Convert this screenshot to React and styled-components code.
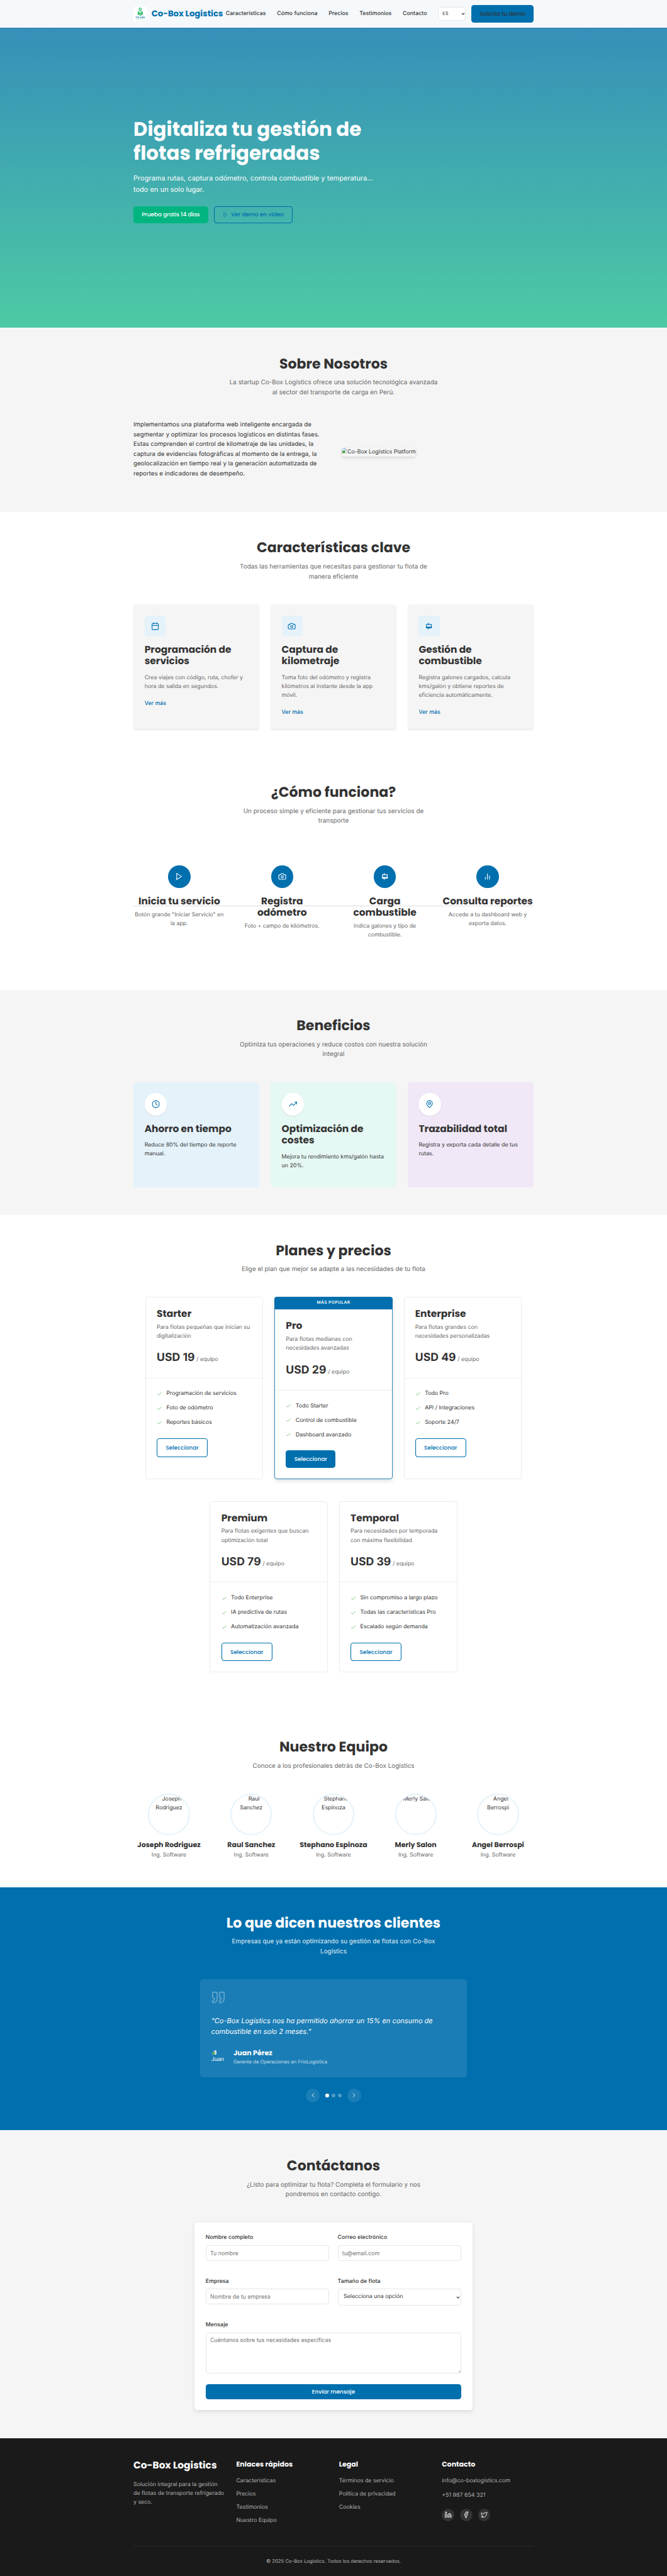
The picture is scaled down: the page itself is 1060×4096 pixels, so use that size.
import React from 'react';
import styled, { createGlobalStyle, css } from 'styled-components';

/* Sizes are written on a 16-unit base and emitted as rem. */
const r = (n) => `${n / 16}rem`;

const c = {
  primary: '#006fae',
  accent: '#00b580',
  text: '#333333',
  muted: '#666666',
  light: '#f5f5f5',
  tint: '#e5f2fa',
  line: '#ebebeb',
  dark: '#1a1a1a',
};

const bodyFont = `Inter, 'Open Sans', sans-serif`;
const headFont = `Poppins, Inter, 'Open Sans', sans-serif`;

const Global = createGlobalStyle`
  *, *::before, *::after { box-sizing: border-box; margin: 0; padding: 0; }
  html { font-size: 55.2083%; }
  body {
    font-family: ${bodyFont};
    font-size: 1rem;
    line-height: 1.6;
    color: ${c.text};
    background: #fff;
    text-rendering: geometricPrecision;
  }
  a { color: inherit; text-decoration: none; }
  ul { list-style: none; }
  button, input, textarea { font: inherit; color: inherit; }
`;

const heading = css`
  font-family: ${headFont};
  font-weight: 700;
  line-height: 1.2;
  white-space: pre;
`;

/* ---------- shared ---------- */
const Container = styled.div`
  width: ${r(1152)};
  margin: 0 auto;
`;

const Section = styled.section`
  padding: ${r(80)} 0;
  background: ${(p) => p.$bg || '#fff'};
  color: ${(p) => p.$color || c.text};
`;

const SectionHead = styled.header`
  text-align: center;
  margin-bottom: ${r(64)};
`;

const H2 = styled.h2`
  ${heading}
  font-size: ${r(40)};
  margin-bottom: ${r(16)};
`;

const Lead = styled.p`
  font-size: ${r(18)};
  line-height: ${r(28.8)};
  white-space: pre;
  color: ${(p) => p.$color || c.muted};
`;

const H3 = styled.h3`
  ${heading}
  font-size: ${r(28)};
`;

const Copy = styled.p`
  white-space: pre;
  color: ${(p) => p.$color || c.muted};
`;

const Svg = styled.svg`
  display: block;
  flex: none;
  width: ${(p) => r(p.$size)};
  height: ${(p) => r(p.$size)};
  fill: none;
  stroke: currentColor;
  stroke-width: 2;
  stroke-linecap: round;
  stroke-linejoin: round;
`;

const glyphs = {
  play: <polygon points="5 3 19 12 5 21 5 3" />,
  calendar: (
    <>
      <rect x="3" y="4" width="18" height="18" rx="2" />
      <path d="M16 2v4M8 2v4M3 10h18" />
    </>
  ),
  camera: (
    <>
      <path d="M14.5 4h-5L7 7H4a2 2 0 0 0-2 2v9a2 2 0 0 0 2 2h16a2 2 0 0 0 2-2V9a2 2 0 0 0-2-2h-3l-2.5-3z" />
      <circle cx="12" cy="13" r="3" />
    </>
  ),
  fuel: (
    <>
      <path d="M10 3v4M10 17v4M4 15h16" />
      <rect x="5" y="7" width="14" height="10" />
      <rect x="5" y="15" width="14" height="2" fill="currentColor" />
    </>
  ),
  bars: <path d="M18 20V10M12 20V4M6 20v-6" />,
  clock: (
    <>
      <circle cx="12" cy="12" r="10" />
      <path d="M12 6v6l4 2" />
    </>
  ),
  trend: (
    <>
      <polyline points="23 6 13.5 15.5 8.5 10.5 1 18" />
      <polyline points="17 6 23 6 23 12" />
    </>
  ),
  pin: (
    <>
      <path d="M20 10c0 6-8 12-8 12s-8-6-8-12a8 8 0 0 1 16 0Z" />
      <circle cx="12" cy="10" r="3" />
    </>
  ),
  check: <polyline points="20 6 9 17 4 12" />,
  left: <polyline points="15 18 9 12 15 6" />,
  right: <polyline points="9 18 15 12 9 6" />,
  quote: (
    <>
      <path d="M3 21c3 0 7-1 7-8V5c0-1.25-.756-2.017-2-2H4c-1.25 0-2 .75-2 1.972V11c0 1.25.75 2 2 2 1 0 1 0 1 1v1c0 1-1 2-2 2s-1 .008-1 1.031V20c0 1 0 1 1 1z" />
      <path d="M15 21c3 0 7-1 7-8V5c0-1.25-.757-2.017-2-2h-4c-1.25 0-2 .75-2 1.972V11c0 1.25.75 2 2 2h.75c0 2.25.25 4-2.75 4v3c0 1 0 1 1 1z" />
    </>
  ),
  linkedin: (
    <>
      <path d="M16 8a6 6 0 0 1 6 6v7h-4v-7a2 2 0 0 0-2-2 2 2 0 0 0-2 2v7h-4v-7a6 6 0 0 1 6-6z" />
      <rect x="2" y="9" width="4" height="12" />
      <circle cx="4" cy="4" r="2" />
    </>
  ),
  facebook: <path d="M18 2h-3a5 5 0 0 0-5 5v3H7v4h3v8h4v-8h3l1-4h-4V7a1 1 0 0 1 1-1h3z" />,
  twitter: (
    <path d="M22 4s-.7 2.1-2 3.4c1.6 10-9.4 17.3-18 11.6 2.2.1 4.4-.6 6-2C3 15.5.5 9.6 3 5c2.2 2.6 5.6 4.1 9 4-.9-4.2 4-6.6 7-3.8 1.1 0 3-1.2 3-1.2z" />
  ),
  caret: <polyline points="4 8 12 16 20 8" strokeWidth="4.5" strokeLinecap="butt" strokeLinejoin="miter" />,
};

const Icon = ({ name, size = 24 }) => (
  <Svg $size={size} viewBox="0 0 24 24" aria-hidden="true">
    {glyphs[name]}
  </Svg>
);

const BrokenSvg = styled.svg`
  display: inline-block;
  flex: none;
  width: ${r(16)};
  height: ${r(16)};
  vertical-align: baseline;
`;

const BrokenImage = () => (
  <BrokenSvg viewBox="0 0 16 16" aria-hidden="true">
    <path d="M1.5 .5h8.5l4.5 4.5v10.5h-13z" fill="#c6dbf7" stroke="#9a9a9a" />
    <path d="M10 .5v4.5h4.5" fill="#fff" stroke="#9a9a9a" />
    <ellipse cx="5.5" cy="5" rx="2.2" ry="1.3" fill="#fff" />
    <path d="M2 15v-3.5c3-4.5 6-4 8.5-.5L14 15z" fill="#4ea83c" />
    <path d="M8 16 16 7v4l-4.5 5z" fill="#fff" />
  </BrokenSvg>
);

const Button = styled.button`
  display: inline-flex;
  align-items: center;
  justify-content: center;
  gap: ${r(8)};
  height: ${(p) => r(p.$h || 49.6)};
  width: ${(p) => (p.$w ? r(p.$w) : 'auto')};
  border: 0;
  border-radius: ${r(8)};
  font-family: ${headFont};
  font-weight: 500;
  white-space: nowrap;
  background: ${(p) => p.$bg || c.primary};
  color: ${(p) => p.$color || '#fff'};
`;

const OutlineButton = styled(Button)`
  background: transparent;
  color: ${c.primary};
  box-shadow: inset 0 0 0 ${r(2)} ${c.primary};
`;

/* ---------- header ---------- */
const HeaderBar = styled.header`
  height: ${r(80)};
  background: #f5f9fc;
  box-shadow: 0 ${r(2)} ${r(4)} rgba(0, 0, 0, 0.1);
  position: relative;
  z-index: 2;
`;

const HeaderRow = styled(Container)`
  height: 100%;
  display: flex;
  align-items: center;
  justify-content: space-between;
`;

const Brand = styled.a`
  display: flex;
  align-items: center;
  gap: ${r(12)};
  font-size: ${r(24)};
  color: ${c.primary};
`;

const BrandName = styled.span`
  ${heading}
`;

const LogoSvg = styled.svg`
  width: ${r(40)};
  height: ${r(40)};
  background: #fff;
`;

const HeaderRight = styled.div`
  display: flex;
  align-items: center;
`;

const Nav = styled.nav`
  display: flex;
  gap: ${r(32)};
  margin-right: ${r(32)};
  font-weight: 500;
  white-space: nowrap;
`;

const LangSelect = styled.div`
  display: flex;
  align-items: center;
  justify-content: space-between;
  width: ${r(80)};
  height: ${r(40)};
  margin-right: ${r(16)};
  padding: 0 ${r(3)} 0 ${r(13)};
  font-size: ${r(13.3)};
  background: #fff;
  border-radius: ${r(8)};
  box-shadow: inset 0 0 0 1px #e6e6e6;
`;

const Logo = () => (
  <LogoSvg viewBox="0 0 40 40" aria-hidden="true">
    <path
      fillRule="evenodd"
      fill="#43c478"
      d="M19.8 2a4.6 4.6 0 0 1 4.6 4.6c0 2.6-2.6 5-4.6 7.4-2-2.4-4.6-4.8-4.6-7.4A4.6 4.6 0 0 1 19.8 2zm0 2.6a2 2 0 1 0 0 4 2 2 0 0 0 0-4z"
    />
    <path fill="#43c478" d="M12.2 13.5l2.6-1.2 5 4.7 5-4.7 2.6 1.2v8.3L19.8 25.5l-7.6-3.7z" />
    <path stroke="#fff" strokeWidth=".6" d="M19.8 17v8" />
    <text x="20" y="32" textAnchor="middle" textLength="27" fontFamily={bodyFont} fontSize="6.5" fontWeight="700" fill="#006fae">
      CO-BOX
    </text>
    <text x="20" y="37" textAnchor="middle" textLength="24" fontFamily={bodyFont} fontSize="3.4" fontWeight="600" fill="#43c478">
      LOGISTICS
    </text>
  </LogoSvg>
);

const Header = () => (
  <HeaderBar>
    <HeaderRow>
      <Brand>
        <Logo />
        <BrandName>Co-Box Logistics</BrandName>
      </Brand>
      <HeaderRight>
        <Nav>
          {['Características', 'Cómo funciona', 'Precios', 'Testimonios', 'Contacto'].map((t) => (
            <a key={t}>{t}</a>
          ))}
        </Nav>
        <LangSelect>
          ES
          <Icon name="caret" size={11} />
        </LangSelect>
        <Button $w={179} $color={c.text}>
          Solicita tu demo
        </Button>
      </HeaderRight>
    </HeaderRow>
  </HeaderBar>
);

/* ---------- hero ---------- */
const HeroArea = styled.section`
  height: ${r(944.5)};
  margin-top: ${r(-80)};
  padding-top: ${r(339.5)};
  background: linear-gradient(180deg, #348abb 0%, #4dcaa4 100%);
  color: #fff;
`;

const H1 = styled.h1`
  ${heading}
  font-size: ${r(56)};
  margin-bottom: ${r(24)};
`;

const HeroText = styled.p`
  font-size: ${r(20)};
  line-height: ${r(32)};
  white-space: pre;
  margin-bottom: ${r(32)};
`;

const ButtonRow = styled.div`
  display: flex;
  gap: ${r(16)};
`;

const Hero = () => (
  <HeroArea>
    <Container>
      <H1>{'Digitaliza tu gestión de\nflotas refrigeradas'}</H1>
      <HeroText>{'Programa rutas, captura odómetro, controla combustible y temperatura...\ntodo en un solo lugar.'}</HeroText>
      <ButtonRow>
        <Button $bg={c.accent} $w={215}>
          Prueba gratis 14 días
        </Button>
        <OutlineButton $w={228}>
          <Icon name="play" size={16} />
          Ver demo en vídeo
        </OutlineButton>
      </ButtonRow>
    </Container>
  </HeroArea>
);

/* ---------- about ---------- */
const AboutGrid = styled.div`
  display: grid;
  grid-template-columns: 1fr 1fr;
  gap: ${r(48)};
  align-items: center;
`;

const AboutText = styled.p`
  font-size: ${r(17.6)};
  line-height: ${r(28.16)};
  white-space: pre;
  margin-bottom: ${r(16)};
`;

const MissingPicture = styled.div`
  display: flex;
  justify-self: start;
  height: ${r(26)};
  white-space: nowrap;
  line-height: ${r(26)};
  border-radius: ${r(8)};
  overflow: hidden;
  box-shadow: 0 ${r(4)} ${r(8)} rgba(0, 0, 0, 0.12);
`;

const About = () => (
  <Section $bg={c.light}>
    <Container>
      <SectionHead>
        <H2>Sobre Nosotros</H2>
        <Lead>{'La startup Co-Box Logistics ofrece una solución tecnológica avanzada\nal sector del transporte de carga en Perú.'}</Lead>
      </SectionHead>
      <AboutGrid>
        <AboutText>
          {
            'Implementamos una plataforma web inteligente encargada de\nsegmentar y optimizar los procesos logísticos en distintas fases.\nEstas comprenden el control de kilometraje de las unidades, la\ncaptura de evidencias fotográficas al momento de la entrega, la\ngeolocalización en tiempo real y la generación automatizada de\nreportes e indicadores de desempeño.'
          }
        </AboutText>
        <MissingPicture>
          <BrokenImage />
          Co-Box Logistics Platform
        </MissingPicture>
      </AboutGrid>
    </Container>
  </Section>
);

/* ---------- features ---------- */
const ThreeColumns = styled.div`
  display: grid;
  grid-template-columns: repeat(3, 1fr);
  gap: ${r(32)};
`;

const FeatureCard = styled.article`
  height: ${r(358.7)};
  padding: ${r(32)};
  background: ${c.light};
  border-radius: ${r(8)};
  box-shadow: 0 ${r(2)} ${r(4)} rgba(0, 0, 0, 0.09);
`;

const FeatureIcon = styled.div`
  display: grid;
  place-items: center;
  width: ${r(60)};
  height: ${r(60)};
  margin-bottom: ${r(24)};
  border-radius: ${r(8)};
  background: ${c.tint};
  color: ${c.primary};
`;

const FeatureTitle = styled(H3)`
  margin-bottom: ${r(16)};
`;

const MoreLink = styled.a`
  display: block;
  margin-top: ${r(24)};
  font-weight: 500;
  color: ${c.primary};
`;

const features = [
  ['calendar', 'Programación de\nservicios', 'Crea viajes con código, ruta, chofer y\nhora de salida en segundos.'],
  ['camera', 'Captura de\nkilometraje', 'Toma foto del odómetro y registra\nkilómetros al instante desde la app\nmóvil.'],
  ['fuel', 'Gestión de\ncombustible', 'Registra galones cargados, calcula\nkms/galón y obtiene reportes de\neficiencia automáticamente.'],
];

const Features = () => (
  <Section>
    <Container>
      <SectionHead>
        <H2>Características clave</H2>
        <Lead>{'Todas las herramientas que necesitas para gestionar tu flota de\nmanera eficiente'}</Lead>
      </SectionHead>
      <ThreeColumns>
        {features.map(([icon, title, text]) => (
          <FeatureCard key={icon}>
            <FeatureIcon>
              <Icon name={icon} />
            </FeatureIcon>
            <FeatureTitle>{title}</FeatureTitle>
            <Copy>{text}</Copy>
            <MoreLink>Ver más</MoreLink>
          </FeatureCard>
        ))}
      </ThreeColumns>
    </Container>
  </Section>
);

/* ---------- how it works ---------- */
const Steps = styled.div`
  position: relative;
  display: grid;
  grid-template-columns: repeat(4, ${r(264)});
  gap: ${r(32)};
  height: ${r(326.4)};
  padding-top: ${r(48)};

  &::before {
    content: '';
    position: absolute;
    left: 0;
    right: 0;
    top: 50%;
    height: ${r(2)};
    background: #dddddd;
  }
`;

const Step = styled.div`
  position: relative;
  display: flex;
  flex-direction: column;
  align-items: center;
  text-align: center;
`;

const StepIcon = styled.div`
  display: grid;
  place-items: center;
  width: ${r(64)};
  height: ${r(64)};
  margin-bottom: ${r(24)};
  border-radius: 50%;
  background: ${c.primary};
  color: #fff;
`;

const StepTitle = styled(H3)`
  margin-bottom: ${r(8)};
`;

const steps = [
  ['play', 'Inicia tu servicio', 'Botón grande "Iniciar Servicio" en\nla app.'],
  ['camera', 'Registra\nodómetro', 'Foto + campo de kilómetros.'],
  ['fuel', 'Carga\ncombustible', 'Indica galones y tipo de\ncombustible.'],
  ['bars', 'Consulta reportes', 'Accede a tu dashboard web y\nexporta datos.'],
];

const HowItWorks = () => (
  <Section>
    <Container>
      <SectionHead>
        <H2>¿Cómo funciona?</H2>
        <Lead>{'Un proceso simple y eficiente para gestionar tus servicios de\ntransporte'}</Lead>
      </SectionHead>
      <Steps>
        {steps.map(([icon, title, text]) => (
          <Step key={icon}>
            <StepIcon>
              <Icon name={icon} />
            </StepIcon>
            <StepTitle>{title}</StepTitle>
            <Copy>{text}</Copy>
          </Step>
        ))}
      </Steps>
    </Container>
  </Section>
);

/* ---------- benefits ---------- */
const BenefitCard = styled.article`
  height: ${r(302.4)};
  padding: ${r(32)};
  border-radius: ${r(8)};
  background: ${(p) => p.$bg};
`;

const BenefitIcon = styled.div`
  display: grid;
  place-items: center;
  width: ${r(64)};
  height: ${r(64)};
  margin-bottom: ${r(24)};
  border-radius: 50%;
  background: #fff;
  color: ${c.primary};
  box-shadow: 0 ${r(2)} ${r(4)} rgba(0, 0, 0, 0.08);
`;

const benefits = [
  ['clock', c.tint, 'Ahorro en tiempo', 'Reduce 80% del tiempo de reporte\nmanual.'],
  ['trend', '#e5f8f3', 'Optimización de\ncostes', 'Mejora tu rendimiento kms/galón hasta\nun 20%.'],
  ['pin', '#f0e8f6', 'Trazabilidad total', 'Registra y exporta cada detalle de tus\nrutas.'],
];

const Benefits = () => (
  <Section $bg={c.light}>
    <Container>
      <SectionHead>
        <H2>Beneficios</H2>
        <Lead>{'Optimiza tus operaciones y reduce costos con nuestra solución\nintegral'}</Lead>
      </SectionHead>
      <ThreeColumns>
        {benefits.map(([icon, bg, title, text]) => (
          <BenefitCard key={icon} $bg={bg}>
            <BenefitIcon>
              <Icon name={icon} />
            </BenefitIcon>
            <FeatureTitle>{title}</FeatureTitle>
            <Copy $color={c.text}>{text}</Copy>
          </BenefitCard>
        ))}
      </ThreeColumns>
    </Container>
  </Section>
);

/* ---------- pricing ---------- */
const PlanRow = styled.div`
  display: flex;
  justify-content: center;
  gap: ${r(32)};
  margin-bottom: ${(p) => r(p.$mb)};
`;

const PlanCard = styled.article`
  width: ${r(340)};
  height: ${(p) => r(p.$h)};
  padding-top: ${r(1)};
  border-radius: ${r(8)};
  overflow: hidden;
  background: #fff;
  box-shadow: inset 0 0 0 1px ${(p) => (p.$popular ? '#2b87bc' : c.line)}
    ${(p) => (p.$popular ? `, 0 ${r(4)} ${r(12)} rgba(0, 0, 0, 0.12)` : '')};
`;

const Badge = styled.div`
  height: ${r(35.2)};
  margin-top: ${r(-1)};
  margin-bottom: ${r(1)};
  line-height: ${r(36)};
  text-align: center;
  font-size: ${r(12)};
  font-weight: 600;
  letter-spacing: ${r(0.8)};
  background: ${c.primary};
  color: #fff;
`;

const PlanHead = styled.div`
  height: ${r(233)};
  margin: 0 1px;
  padding: ${r(32)} ${r(31.2)};
  border-bottom: 1px solid #eeeeee;
`;

const PlanName = styled(H3)`
  margin-bottom: ${r(8)};
`;

const Price = styled.p`
  display: flex;
  align-items: baseline;
  gap: ${r(5)};
  margin-top: ${r(24)};
  font-size: ${r(32)};
  font-weight: 700;
  color: ${c.text};
`;

const PriceUnit = styled.span`
  font-size: ${r(16)};
  font-weight: 400;
  color: ${c.muted};
`;

const PlanBody = styled.div`
  padding: ${r(32)} ${r(33)};
`;

const FeatureList = styled.ul`
  display: grid;
  gap: ${r(16)};
  margin-bottom: ${r(32)};
`;

const FeatureItem = styled.li`
  display: flex;
  align-items: center;
  gap: ${r(12)};
  height: ${r(25.6)};
  white-space: nowrap;
`;

const Tick = styled.span`
  color: #4caf50;
`;

const plansTop = [
  ['Starter', 'Para flotas pequeñas que inician su\ndigitalización', 19, ['Programación de servicios', 'Foto de odómetro', 'Reportes básicos']],
  ['Pro', 'Para flotas medianas con\nnecesidades avanzadas', 29, ['Todo Starter', 'Control de combustible', 'Dashboard avanzado'], true],
  ['Enterprise', 'Para flotas grandes con\nnecesidades personalizadas', 49, ['Todo Pro', 'API / Integraciones', 'Soporte 24/7']],
];
const plansBottom = [
  ['Premium', 'Para flotas exigentes que buscan\noptimización total', 79, ['Todo Enterprise', 'IA predictiva de rutas', 'Automatización avanzada']],
  ['Temporal', 'Para necesidades por temporada\ncon máxima flexibilidad', 39, ['Sin compromiso a largo plazo', 'Todas las características Pro', 'Escalado según demanda']],
];

const Plan = ({ plan: [name, text, price, items, popular], h }) => (
  <PlanCard $h={h} $popular={popular}>
    {popular && <Badge>MÁS POPULAR</Badge>}
    <PlanHead>
      <PlanName>{name}</PlanName>
      <Copy>{text}</Copy>
      <Price>
        USD {price}
        <PriceUnit>/ equipo</PriceUnit>
      </Price>
    </PlanHead>
    <PlanBody>
      <FeatureList>
        {items.map((t) => (
          <FeatureItem key={t}>
            <Tick>
              <Icon name="check" size={16} />
            </Tick>
            {t}
          </FeatureItem>
        ))}
      </FeatureList>
      {popular ? (
        <Button $w={142.8}>Seleccionar</Button>
      ) : (
        <OutlineButton $w={146.8} $h={53.6}>
          Seleccionar
        </OutlineButton>
      )}
    </PlanBody>
  </PlanCard>
);

const Pricing = () => (
  <Section>
    <Container>
      <SectionHead>
        <H2>Planes y precios</H2>
        <Lead>Elige el plan que mejor se adapte a las necesidades de tu flota</Lead>
      </SectionHead>
      <PlanRow $mb={64}>
        {plansTop.map((p) => (
          <Plan key={p[0]} plan={p} h={524.4} />
        ))}
      </PlanRow>
      <PlanRow $mb={32}>
        {plansBottom.map((p) => (
          <Plan key={p[0]} plan={p} h={493} />
        ))}
      </PlanRow>
    </Container>
  </Section>
);

/* ---------- team ---------- */
const TeamGrid = styled.div`
  display: grid;
  grid-template-columns: repeat(5, 1fr);
  gap: ${r(32)};
  text-align: center;
`;

const Portrait = styled.div`
  display: flex;
  flex-direction: column;
  align-items: center;
  width: ${r(120)};
  height: ${r(120)};
  margin: 0 auto ${r(16)};
  border: 2px solid ${c.tint};
  border-radius: 50%;
  overflow: hidden;
  white-space: nowrap;
`;

const PortraitLine = styled.span`
  padding-left: ${(p) => r(p.$indent || 0)};
`;

const Member = styled.h4`
  ${heading}
  font-size: ${r(20)};
  margin-bottom: ${r(4)};
`;

const team = [
  ['Joseph Rodriguez', ['Joseph', 'Rodriguez']],
  ['Raul Sanchez', ['Raul', 'Sanchez']],
  ['Stephano Espinoza', ['Stephano', 'Espinoza']],
  ['Merly Salon', ['Merly Salon']],
  ['Angel Berrospi', ['Angel', 'Berrospi']],
];

const Team = () => (
  <Section>
    <Container>
      <SectionHead>
        <H2>Nuestro Equipo</H2>
        <Lead>Conoce a los profesionales detrás de Co-Box Logistics</Lead>
      </SectionHead>
      <TeamGrid>
        {team.map(([name, lines]) => (
          <div key={name}>
            <Portrait>
              {lines.map((line, i) => (
                <PortraitLine key={line} $indent={i === 0 ? 16 : 0}>
                  {line}
                </PortraitLine>
              ))}
            </Portrait>
            <Member>{name}</Member>
            <Copy>Ing. Software</Copy>
          </div>
        ))}
      </TeamGrid>
    </Container>
  </Section>
);

/* ---------- testimonials ---------- */
const QuoteCard = styled.figure`
  width: ${r(768)};
  height: ${r(282.2)};
  margin: 0 auto ${r(32)};
  padding: ${r(32)};
  border-radius: ${r(8)};
  background: rgba(255, 255, 255, 0.1);
`;

const QuoteMark = styled.div`
  height: ${r(72)};
  color: rgba(255, 255, 255, 0.3);
`;

const QuoteText = styled.blockquote`
  font-size: ${r(20)};
  line-height: ${r(32)};
  font-style: italic;
  white-space: pre;
  margin-bottom: ${r(32)};
`;

const Author = styled.figcaption`
  display: flex;
  align-items: center;
  gap: ${r(16)};
`;

const AuthorPhoto = styled.div`
  width: ${r(48)};
  height: ${r(48)};
  border-radius: 50%;
  overflow: hidden;
  line-height: ${r(18)};
`;

const AuthorRole = styled.p`
  font-size: ${r(14)};
  line-height: ${r(22.4)};
  color: rgba(255, 255, 255, 0.75);
`;

const Pager = styled.div`
  display: flex;
  justify-content: center;
  align-items: center;
  gap: ${r(16)};
`;

const PagerButton = styled.button`
  display: grid;
  place-items: center;
  width: ${r(40)};
  height: ${r(40)};
  border: 0;
  border-radius: 50%;
  background: rgba(255, 255, 255, 0.1);
  color: #fff;
`;

const Dots = styled.div`
  display: flex;
  gap: ${r(8)};
`;

const Dot = styled.span`
  width: ${r(10)};
  height: ${r(10)};
  border-radius: 50%;
  background: ${(p) => (p.$on ? '#fff' : 'rgba(255, 255, 255, 0.3)')};
`;

const Testimonials = () => (
  <Section $bg={c.primary} $color="#fff">
    <Container>
      <SectionHead>
        <H2>Lo que dicen nuestros clientes</H2>
        <Lead $color="rgba(255, 255, 255, 0.95)">{'Empresas que ya están optimizando su gestión de flotas con Co-Box\nLogistics'}</Lead>
      </SectionHead>
      <QuoteCard>
        <QuoteMark>
          <Icon name="quote" size={40} />
        </QuoteMark>
        <QuoteText>{'"Co-Box Logistics nos ha permitido ahorrar un 15% en consumo de\ncombustible en solo 2 meses."'}</QuoteText>
        <Author>
          <AuthorPhoto>
            <BrokenImage />
            <br />
            Juan
          </AuthorPhoto>
          <div>
            <Member>Juan Pérez</Member>
            <AuthorRole>Gerente de Operaciones en FríoLogística</AuthorRole>
          </div>
        </Author>
      </QuoteCard>
      <Pager>
        <PagerButton aria-label="Anterior">
          <Icon name="left" size={20} />
        </PagerButton>
        <Dots>
          <Dot $on />
          <Dot />
          <Dot />
        </Dots>
        <PagerButton aria-label="Siguiente">
          <Icon name="right" size={20} />
        </PagerButton>
      </Pager>
    </Container>
  </Section>
);

/* ---------- contact ---------- */
const FormCard = styled.form`
  width: ${r(800)};
  height: ${r(541.2)};
  margin: 0 auto;
  padding: ${r(32)};
  border-radius: ${r(8)};
  background: #fff;
  box-shadow: 0 ${r(4)} ${r(12)} rgba(0, 0, 0, 0.1);
`;

const FieldGrid = styled.div`
  display: grid;
  grid-template-columns: 1fr 1fr;
  grid-auto-rows: ${r(126)};
  column-gap: ${r(24)};
`;

const Field = styled.label`
  display: block;
  position: relative;
`;

const FieldName = styled.span`
  display: block;
  margin-bottom: ${r(8)};
  font-weight: 500;
`;

const control = css`
  display: block;
  width: 100%;
  border: 1px solid #e6e6e6;
  border-radius: ${r(8)};
  background: #fff;
  padding: 0 ${r(11.2)};
  font-size: ${r(16)};
  outline: none;
  &::placeholder {
    color: #757575;
    opacity: 1;
  }
`;

const Input = styled.input`
  ${control}
  height: ${r(44.8)};
`;

const Select = styled.div`
  ${control}
  display: flex;
  align-items: center;
  justify-content: space-between;
  height: ${r(47.5)};
  padding: 0 ${r(2)} 0 ${r(15.2)};
`;

const TextArea = styled.textarea`
  ${control}
  height: ${r(117.4)};
  padding: ${r(11.2)};
  line-height: ${r(19.4)};
  resize: none;
`;

const Grip = styled.svg`
  position: absolute;
  right: ${r(2)};
  bottom: ${r(2)};
  width: ${r(8)};
  height: ${r(8)};
  stroke: #555;
  stroke-width: 1;
  fill: none;
`;

const Submit = styled(Button)`
  width: 100%;
  margin-top: ${r(32)};
`;

const Contact = () => (
  <Section $bg={c.light}>
    <Container>
      <SectionHead>
        <H2>Contáctanos</H2>
        <Lead>{'¿Listo para optimizar tu flota? Completa el formulario y nos\npondremos en contacto contigo.'}</Lead>
      </SectionHead>
      <FormCard>
        <FieldGrid>
          <Field>
            <FieldName>Nombre completo</FieldName>
            <Input placeholder="Tu nombre" />
          </Field>
          <Field>
            <FieldName>Correo electrónico</FieldName>
            <Input placeholder="tu@email.com" />
          </Field>
          <Field>
            <FieldName>Empresa</FieldName>
            <Input placeholder="Nombre de tu empresa" />
          </Field>
          <Field>
            <FieldName>Tamaño de flota</FieldName>
            <Select>
              Selecciona una opción
              <Icon name="caret" size={11} />
            </Select>
          </Field>
        </FieldGrid>
        <Field>
          <FieldName>Mensaje</FieldName>
          <TextArea placeholder="Cuéntanos sobre tus necesidades específicas" />
          <Grip viewBox="0 0 8 8">
            <path d="M1 8 8 1M5 8l3-3" />
          </Grip>
        </Field>
        <Submit type="button" $h={42.4}>
          Enviar mensaje
        </Submit>
      </FormCard>
    </Container>
  </Section>
);

/* ---------- footer ---------- */
const FooterArea = styled.footer`
  height: ${r(399)};
  padding-top: ${r(64)};
  background: ${c.dark};
  color: #b3b3b3;
`;

const FooterGrid = styled.div`
  display: grid;
  grid-template-columns: repeat(4, 1fr);
  gap: ${r(32)};
  height: ${r(246.6)};
`;

const FooterBrand = styled(H3)`
  color: #fff;
  margin-bottom: ${r(24)};
`;

const FooterTitle = styled(Member)`
  color: #fff;
  margin-bottom: ${r(24)};
`;

const LinkList = styled.ul`
  display: grid;
  gap: ${(p) => r(p.$gap || 12)};
`;

const Socials = styled.div`
  display: flex;
  gap: ${r(16)};
  margin-top: ${r(24)};
`;

const SocialLink = styled.a`
  display: grid;
  place-items: center;
  width: ${r(36)};
  height: ${r(36)};
  border-radius: 50%;
  background: #333;
  color: #fff;
`;

const Copyright = styled.p`
  border-top: 1px solid #2b2b2b;
  padding-top: ${r(32)};
  text-align: center;
  font-size: ${r(14)};
  line-height: ${r(22.4)};
`;

const Footer = () => (
  <FooterArea>
    <Container>
      <FooterGrid>
        <div>
          <FooterBrand>Co-Box Logistics</FooterBrand>
          <Copy $color="inherit">{'Solución integral para la gestión\nde flotas de transporte refrigerado\ny seco.'}</Copy>
        </div>
        <div>
          <FooterTitle>Enlaces rápidos</FooterTitle>
          <LinkList>
            {['Características', 'Precios', 'Testimonios', 'Nuestro Equipo'].map((t) => (
              <li key={t}>{t}</li>
            ))}
          </LinkList>
        </div>
        <div>
          <FooterTitle>Legal</FooterTitle>
          <LinkList>
            {['Términos de servicio', 'Política de privacidad', 'Cookies'].map((t) => (
              <li key={t}>{t}</li>
            ))}
          </LinkList>
        </div>
        <div>
          <FooterTitle>Contacto</FooterTitle>
          <LinkList $gap={16}>
            <li>info@co-boxlogistics.com</li>
            <li>+51 987 654 321</li>
          </LinkList>
          <Socials>
            {['linkedin', 'facebook', 'twitter'].map((n) => (
              <SocialLink key={n} aria-label={n}>
                <Icon name={n} size={20} />
              </SocialLink>
            ))}
          </Socials>
        </div>
      </FooterGrid>
      <Copyright>© 2025 Co-Box Logistics. Todos los derechos reservados.</Copyright>
    </Container>
  </FooterArea>
);

const Page = styled.div`
  height: 4096px;
  overflow: hidden;
`;

export default function App() {
  return (
    <Page>
      <Global />
      <Header />
      <Hero />
      <About />
      <Features />
      <HowItWorks />
      <Benefits />
      <Pricing />
      <Team />
      <Testimonials />
      <Contact />
      <Footer />
    </Page>
  );
}
